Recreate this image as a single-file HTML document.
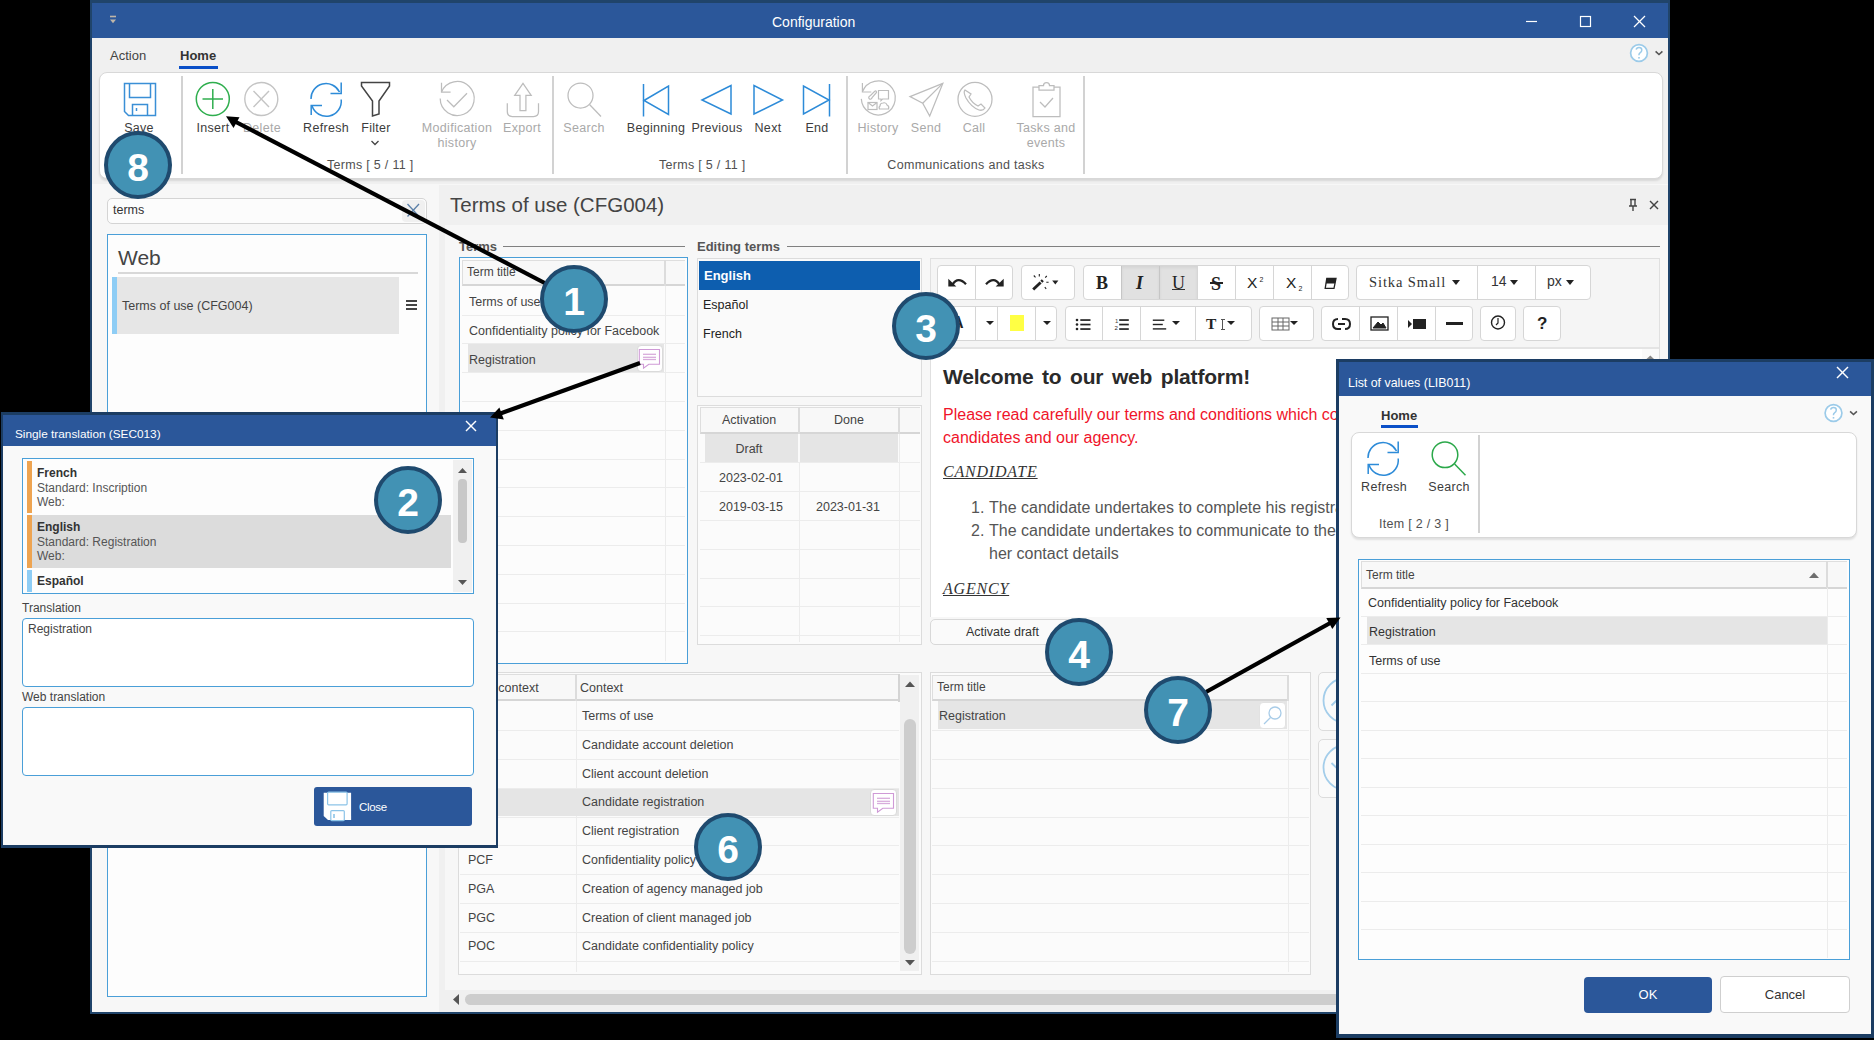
<!DOCTYPE html>
<html><head><meta charset="utf-8">
<style>
*{box-sizing:border-box;margin:0;padding:0}
html,body{width:1874px;height:1040px;overflow:hidden;background:#000;font-family:"Liberation Sans",sans-serif;color:#333;position:relative}
.a{position:absolute}
.t{position:absolute;white-space:nowrap;font-size:13px;line-height:1}
.c{position:absolute;white-space:nowrap;font-size:13px;line-height:15px;text-align:center}
.circ{position:absolute;width:68px;height:68px;border-radius:50%;background:#4292b4;border:4px solid #1f4a6e;color:#fff;font-weight:bold;font-size:39px;text-align:center;line-height:65px;z-index:50}
.rl{color:#3c3c3c;font-size:12.5px;letter-spacing:0.3px}
.dis{color:#a9a9a9}
.gl{position:absolute;height:1px;background:#ececec}
svg{position:absolute;overflow:visible}
</style></head><body>
<!-- ================= MAIN WINDOW ================= -->
<div class="a" style="left:90px;top:0;width:1580px;height:1014px;background:#20446a"></div>
<div class="a" style="left:92px;top:3px;width:1576px;height:35px;background:#2b579a"></div>
<div class="a" style="left:92px;top:38px;width:1576px;height:974px;background:#f7f7f7"></div>
<div class="a" style="left:92px;top:38px;width:1576px;height:146px;background:#f0f0f0"></div>
<div class="t" style="left:772px;top:15px;color:#fff;font-size:14px">Configuration</div>
<!-- title icons -->
<svg style="left:0;top:0" width="1874" height="40">
  <g stroke="#fff" stroke-width="1.2" fill="none">
    <line x1="1526" y1="21.5" x2="1537" y2="21.5"/>
    <rect x="1580.5" y="16.5" width="10" height="10"/>
    <line x1="1634" y1="16" x2="1645" y2="27"/><line x1="1645" y1="16" x2="1634" y2="27"/>
  </g>
  <g fill="#bfb6a8"><rect x="110" y="15.7" width="6" height="1.6"/><path d="M110 19.5 L116 19.5 L113 23.2 Z"/></g>
</svg>
<!-- menu -->
<div class="t" style="left:110px;top:49px;color:#444">Action</div>
<div class="t" style="left:180px;top:49px;color:#333;font-weight:bold">Home</div>
<div class="a" style="left:179px;top:66px;width:39px;height:2.5px;background:#0b50c8"></div>
<svg style="left:0;top:0" width="1874" height="80">
  <circle cx="1639" cy="53" r="8.4" fill="#fff" stroke="#9ccbe9" stroke-width="1.7"/>
  <path d="M1636.2 49.7 Q1636.5 47.5 1639 47.5 Q1641.8 47.5 1641.8 50 Q1641.8 51.7 1640 52.8 Q1638.9 53.6 1638.9 55.2" fill="none" stroke="#9ccbe9" stroke-width="1.5"/>
  <rect x="1638.2" y="57" width="1.6" height="1.6" fill="#9ccbe9"/>
  <path d="M1655.6 51.3 L1659 54.5 L1662.4 51.3" fill="none" stroke="#555" stroke-width="1.6"/>
</svg>
<!-- ribbon -->
<div class="a" style="left:99px;top:72px;width:1564px;height:107px;background:#fff;border:1px solid #d8d8d8;border-radius:8px;box-shadow:0 2px 2px rgba(0,0,0,0.10)"></div>
<div class="a" style="left:181px;top:76px;width:1.5px;height:98px;background:#d2d2d2"></div>
<div class="a" style="left:552px;top:76px;width:1.5px;height:98px;background:#d2d2d2"></div>
<div class="a" style="left:846px;top:76px;width:1.5px;height:98px;background:#d2d2d2"></div>
<div class="a" style="left:1083px;top:76px;width:1.5px;height:98px;background:#d2d2d2"></div>
<svg style="left:0;top:0" width="1874" height="190" fill="none" stroke-width="1.5">
  <!-- save -->
  <g stroke="#3a8fd6">
    <path d="M124.5 83.5 H155.5 V115.5 H128.5 L124.5 111.5 Z"/>
    <path d="M129.5 83.5 V97.5 H150.5 V83.5"/>
    <path d="M132.5 115.5 V104.5 H147.5 V115.5"/>
    <line x1="136.5" y1="108" x2="136.5" y2="111"/>
  </g>
  <!-- insert -->
  <g stroke="#2fae4e"><circle cx="212.8" cy="99" r="16.5"/><line x1="202.5" y1="99" x2="223" y2="99"/><line x1="212.8" y1="89" x2="212.8" y2="109"/></g>
  <!-- delete -->
  <g stroke="#c4c4c4" stroke-width="1.4"><circle cx="261.3" cy="99" r="16.5"/><line x1="253.5" y1="91" x2="269" y2="107"/><line x1="269" y1="91" x2="253.5" y2="107"/></g>
  <!-- refresh -->
  <g stroke="#2d8bd8">
    <path d="M311 99 A15 15 0 0 1 339.5 92"/>
    <path d="M341.2 82.5 V93.4 H330.5"/>
    <path d="M341.2 99.5 A15 15 0 0 1 312 105.8"/>
    <path d="M311.2 115 V105.5 H322"/>
  </g>
  <!-- filter -->
  <g stroke="#444"><path d="M361.5 82.5 H389.5 V86 L379 101 V114 L372.5 116 V101 L361.5 86 Z"/></g>
  <path d="M371.5 141 L375 144.5 L378.5 141" stroke="#444" stroke-width="1.3"/>
  <!-- modification history -->
  <g stroke="#bdbdbd" stroke-width="1.25"><path d="M441.5 92 A17 17 0 1 1 440.2 98.6"/><path d="M441.5 82.7 V92.2 H450.6"/><path d="M447 100 L453.8 106.8 L467 93.3"/></g>
  <!-- export -->
  <g stroke="#bdbdbd" stroke-width="1.25"><path d="M507.3 103.3 V111.5 Q507.3 116.5 512.3 116.5 H533.5 Q538.5 116.5 538.5 111.5 V103.3"/><path d="M520 110.6 V95.4 H514.7 L523 83.3 L531.2 95.4 H525.9 V110.6 Z"/></g>
  <!-- search -->
  <g stroke="#bdbdbd" stroke-width="1.25"><circle cx="580.5" cy="95.5" r="12.5"/><line x1="589.5" y1="104.5" x2="601" y2="116.5"/></g>
  <!-- beginning -->
  <g stroke="#2d8bd8"><line x1="643.5" y1="84" x2="643.5" y2="116.5"/><path d="M644 100.5 L668.5 86 V114.5 Z"/></g>
  <!-- previous -->
  <g stroke="#2d8bd8"><path d="M702 100 L731 85.5 V114 Z"/></g>
  <!-- next -->
  <g stroke="#2d8bd8"><path d="M754 85.5 V114 L782.5 100 Z"/></g>
  <!-- end -->
  <g stroke="#2d8bd8"><path d="M803.5 86 V114 L829 100 Z"/><line x1="829.5" y1="84" x2="829.5" y2="116.5"/></g>
  <!-- history -->
  <g stroke="#bdbdbd" stroke-width="1.2"><path d="M862.4 91.9 A17 17 0 1 1 861.3 98.9"/><path d="M862.4 83 V92 H871.3"/>
    <path d="M878.5 90.5 H888.5 V99 H882.5 L881 100.5 V99 H878.5 Z"/>
    <path d="M869.5 99 Q867.5 97 870.5 95.5 L874.5 91.5 Q876.5 90 876.5 92.5 L872.5 97 Q871 100 869.5 99 Z"/>
    <rect x="868" y="102.5" width="9" height="7"/><path d="M868 102.5 L872.5 106 L877 102.5"/>
    <path d="M879.5 109 H888.5 Q889.5 106 887 105 Q886 102 883 103 Q880 103 880 106 Q878.5 107 879.5 109 Z"/></g>
  <!-- send -->
  <g stroke="#bdbdbd" stroke-width="1.25"><path d="M942.8 83.4 L910 96.6 L922.7 103.2 L929.7 116 Z"/><line x1="922.7" y1="103.2" x2="942.8" y2="83.4"/></g>
  <!-- call -->
  <g stroke="#bdbdbd" stroke-width="1.25"><circle cx="975" cy="99.3" r="17"/><path d="M965 90 Q963 92 966 98 Q971 107 979 110 Q983 111 985 108 L981 104 L978 106 Q972 103 969 97 L971 94 Z"/></g>
  <!-- tasks -->
  <g stroke="#bdbdbd" stroke-width="1.25"><path d="M1039 87 H1033 V116.5 H1060 V87 H1054"/><path d="M1039 90 V85.5 H1043.5 Q1043.5 82.5 1046.5 82.5 Q1049.5 82.5 1049.5 85.5 H1054 V90 Z"/><path d="M1040 102 L1045 107 L1053 98"/></g>
</svg>
<!-- ribbon labels -->
<div class="c rl" style="left:109px;top:121px;width:60px">Save</div>
<div class="c rl" style="left:187px;top:121px;width:52px">Insert</div>
<div class="c rl dis" style="left:236px;top:121px;width:52px">Delete</div>
<div class="c rl" style="left:296px;top:121px;width:60px">Refresh</div>
<div class="c rl" style="left:350px;top:121px;width:52px">Filter</div>
<div class="c rl dis" style="left:412px;top:121px;width:90px">Modification<br>history</div>
<div class="c rl dis" style="left:492px;top:121px;width:60px">Export</div>
<div class="c rl" style="color:#505050;top:158px;left:327px;width:80px">Terms [ 5 / 11 ]</div>
<div class="c rl dis" style="left:554px;top:121px;width:60px">Search</div>
<div class="c rl" style="left:621px;top:121px;width:70px">Beginning</div>
<div class="c rl" style="left:687px;top:121px;width:60px">Previous</div>
<div class="c rl" style="left:738px;top:121px;width:60px">Next</div>
<div class="c rl" style="left:787px;top:121px;width:60px">End</div>
<div class="c rl" style="color:#505050;top:158px;left:659px;width:80px">Terms [ 5 / 11 ]</div>
<div class="c rl dis" style="left:848px;top:121px;width:60px">History</div>
<div class="c rl dis" style="left:896px;top:121px;width:60px">Send</div>
<div class="c rl dis" style="left:944px;top:121px;width:60px">Call</div>
<div class="c rl dis" style="left:1006px;top:121px;width:80px">Tasks and<br>events</div>
<div class="c rl" style="color:#505050;top:158px;left:886px;width:160px">Communications and tasks</div>


<!-- ============ LEFT PANEL ============ -->

<div class="a" style="left:439px;top:185px;width:6px;height:827px;background:#f0f0f0"></div>
<div class="a" style="left:107px;top:198px;width:320px;height:26px;background:#fcfcfc;border:1px solid #d4d4d4;border-radius:5px"></div>
<div class="a" style="left:402px;top:200px;width:23px;height:22px;background:#f0f0f0;border-radius:4px"></div>
<div class="t" style="left:113px;top:204px;font-size:12.5px;color:#333">terms</div>
<svg style="left:0;top:0" width="500" height="240"><g stroke="#5a7fa8" stroke-width="1.3"><line x1="407.5" y1="204" x2="419" y2="216.5"/><line x1="419" y1="204" x2="407.5" y2="216.5"/></g></svg>
<div class="a" style="left:107px;top:234px;width:320px;height:763px;background:#fdfdfd;border:1.5px solid #4a9fd8"></div>
<div class="t" style="left:118px;top:247px;font-size:21px;color:#444">Web</div>
<div class="a" style="left:118px;top:272px;width:300px;height:1.5px;background:#d8d8d8"></div>
<div class="a" style="left:112px;top:277px;width:287px;height:57px;background:#e6e6e6"></div>
<div class="a" style="left:112px;top:277px;width:5px;height:57px;background:#8ecdf5"></div>
<div class="t" style="left:122px;top:300px;font-size:12.5px;color:#444">Terms of use (CFG004)</div>
<div class="a" style="left:406px;top:300px;width:11px;height:2px;background:#444"></div>
<div class="a" style="left:406px;top:304px;width:11px;height:2px;background:#444"></div>
<div class="a" style="left:406px;top:308px;width:11px;height:2px;background:#444"></div>

<!-- ============ CONTENT ============ -->
<div class="a" style="left:445px;top:185px;width:1223px;height:40px;background:#f0f0f0"></div>
<div class="t" style="left:450px;top:195px;font-size:20.5px;color:#444">Terms of use (CFG004)</div>
<svg style="left:0;top:0" width="1874" height="240"><g stroke="#444" stroke-width="1.4" fill="none"><path d="M1630 199.5 H1636 M1631 199.5 V206 H1635 V199.5 M1629 206 H1637 M1633 206 V211"/><line x1="1650" y1="201" x2="1658" y2="209"/><line x1="1658" y1="201" x2="1650" y2="209"/></g></svg>
<div class="t" style="left:459px;top:240px;font-size:13px;font-weight:bold;color:#555">Terms</div>
<div class="a" style="left:503px;top:246px;width:182px;height:1.2px;background:#808080"></div>
<div class="t" style="left:697px;top:240px;font-size:13px;font-weight:bold;color:#555">Editing terms</div>
<div class="a" style="left:787px;top:246px;width:873px;height:1.2px;background:#808080"></div>

<!-- terms list -->
<div class="a" style="left:459px;top:257px;width:229px;height:407px;background:#fcfcfc;border:1.5px solid #4a9fd8"></div>
<div class="a" style="left:462px;top:260px;width:223px;height:26px;background:#f8f8f8;border-bottom:2px solid #d6d6d6;border-top:1px solid #dedede;border-left:1px solid #dedede"></div>
<div class="a" style="left:664px;top:260px;width:2px;height:26px;background:#dcdcdc"></div>
<div class="a" style="left:665px;top:286px;width:1px;height:375px;background:#ececec"></div>
<div class="t" style="left:467px;top:266px;font-size:12px;color:#444">Term title</div>
<div class="a" style="left:468px;top:344px;width:196px;height:28px;background:#e5e5e5"></div>
<div class="t" style="left:469px;top:296px;font-size:12.5px;color:#444">Terms of use</div>
<div class="t" style="left:469px;top:325px;font-size:12.5px;color:#444">Confidentiality policy for Facebook</div>
<div class="t" style="left:469px;top:354px;font-size:12.5px;color:#444">Registration</div>
<div class="gl" style="left:462px;top:314.5px;width:223px"></div>
<div class="gl" style="left:462px;top:343.3px;width:223px"></div>
<div class="gl" style="left:462px;top:372.1px;width:223px"></div>
<div class="gl" style="left:462px;top:400.9px;width:223px"></div>
<div class="gl" style="left:462px;top:429.7px;width:223px"></div>
<div class="gl" style="left:462px;top:458.5px;width:223px"></div>
<div class="gl" style="left:462px;top:487.3px;width:223px"></div>
<div class="gl" style="left:462px;top:516.1px;width:223px"></div>
<div class="gl" style="left:462px;top:544.9px;width:223px"></div>
<div class="gl" style="left:462px;top:573.7px;width:223px"></div>
<div class="gl" style="left:462px;top:602.5px;width:223px"></div>
<div class="gl" style="left:462px;top:631.3px;width:223px"></div>
<div class="a" style="left:637px;top:345px;width:26px;height:27px;background:#fff;border:1px solid #dadada;border-radius:4px"></div>
<svg style="left:0;top:0" width="1874" height="1040" fill="none"><g stroke="#cf9ad6" stroke-width="1.1"><path d="M639.3 349.5 H659.5 V364.2 H648.8 L643.5 368.2 V364.2 H639.3 Z"/></g><g stroke="#d8acdc" stroke-width="1.3"><line x1="643" y1="354.3" x2="656" y2="354.3"/><line x1="643" y1="357.3" x2="656" y2="357.3"/><line x1="643" y1="359.5" x2="656" y2="359.5"/></g></svg>

<!-- language list -->
<div class="a" style="left:697px;top:258px;width:225px;height:139px;background:#fafafa;border:1px solid #dcdcdc"></div>
<div class="a" style="left:699px;top:261px;width:221px;height:29px;background:#0d5eaf"></div>
<div class="t" style="left:704px;top:269px;font-size:13px;color:#fff;font-weight:bold">English</div>
<div class="t" style="left:703px;top:299px;font-size:12.5px;color:#222">Español</div>
<div class="t" style="left:703px;top:328px;font-size:12.5px;color:#222">French</div>

<!-- activation grid -->
<div class="a" style="left:697px;top:405px;width:225px;height:240px;background:#fbfbfb;border:1px solid #dcdcdc"></div>
<div class="a" style="left:700px;top:407px;width:220px;height:27px;background:#f8f8f8;border-bottom:2px solid #d6d6d6;border-top:1px solid #dedede;border-left:1px solid #dedede"></div>
<div class="a" style="left:798px;top:407px;width:2px;height:27px;background:#dcdcdc"></div>
<div class="a" style="left:898px;top:407px;width:2px;height:27px;background:#dcdcdc"></div>
<div class="a" style="left:799px;top:434px;width:1px;height:208px;background:#ececec"></div>
<div class="a" style="left:899px;top:434px;width:1px;height:208px;background:#ececec"></div>
<div class="c" style="left:700px;top:413px;width:98px;font-size:12.5px;color:#444">Activation</div>
<div class="c" style="left:800px;top:413px;width:98px;font-size:12.5px;color:#444">Done</div>
<div class="a" style="left:705px;top:434px;width:193px;height:28px;background:#e5e5e5"></div>
<div class="a" style="left:798px;top:434px;width:2px;height:28px;background:#fafafa"></div>
<div class="gl" style="left:700px;top:462.3px;width:220px"></div>
<div class="gl" style="left:700px;top:491.1px;width:220px"></div>
<div class="gl" style="left:700px;top:519.9px;width:220px"></div>
<div class="gl" style="left:700px;top:548.7px;width:220px"></div>
<div class="gl" style="left:700px;top:577.5px;width:220px"></div>
<div class="gl" style="left:700px;top:606.3px;width:220px"></div>
<div class="gl" style="left:700px;top:635.1px;width:220px"></div>
<div class="c" style="left:700px;top:442px;width:98px;font-size:12.5px;color:#444">Draft</div>
<div class="c" style="left:700px;top:471px;width:102px;font-size:12.5px;color:#444">2023-02-01</div>
<div class="c" style="left:700px;top:500px;width:102px;font-size:12.5px;color:#444">2019-03-15</div>
<div class="c" style="left:798px;top:500px;width:100px;font-size:12.5px;color:#444">2023-01-31</div>

<!-- editor -->
<div class="a" style="left:930px;top:258px;width:730px;height:359px;background:#fff;border:1px solid #e0e0e0;border-bottom:none"></div>
<div class="a" style="left:931px;top:259px;width:728px;height:90px;background:#f5f5f5;border-bottom:2px solid #e4e4e4"></div><div class="a" style="left:1642px;top:349px;width:17px;height:12px;background:#fafafa"></div><svg style="left:0;top:0" width="1874" height="400"><path d="M1646.5 359 L1650.3 355.5 L1654 359 Z" fill="#888"/></svg>
<div class="a" style="left:937px;top:265px;width:76px;height:35px;background:#fff;border:1px solid #d6d6d6;border-radius:4px;overflow:hidden"><div class="a" style="left:0px;top:0;width:38px;height:33px;background:transparent;"></div><div class="a" style="left:37px;top:0;width:38px;height:33px;background:transparent;border-left:1px solid #d6d6d6;"></div></div>
<div class="a" style="left:1021px;top:265px;width:54px;height:35px;background:#fff;border:1px solid #d6d6d6;border-radius:4px;overflow:hidden"><div class="a" style="left:0px;top:0;width:54px;height:33px;background:transparent;"></div></div>
<div class="a" style="left:1083px;top:265px;width:266px;height:35px;background:#fff;border:1px solid #d6d6d6;border-radius:4px;overflow:hidden"><div class="a" style="left:0px;top:0;width:38px;height:33px;background:transparent;"></div><div class="a" style="left:37px;top:0;width:38px;height:33px;background:#e1e1e1;border-left:1px solid #c6c6c6;box-shadow:inset 0 2px 3px rgba(0,0,0,0.06);"></div><div class="a" style="left:75px;top:0;width:38px;height:33px;background:#e1e1e1;border-left:1px solid #c6c6c6;box-shadow:inset 0 2px 3px rgba(0,0,0,0.06);"></div><div class="a" style="left:113px;top:0;width:38px;height:33px;background:transparent;border-left:1px solid #d6d6d6;"></div><div class="a" style="left:151px;top:0;width:38px;height:33px;background:transparent;border-left:1px solid #d6d6d6;"></div><div class="a" style="left:189px;top:0;width:38px;height:33px;background:transparent;border-left:1px solid #d6d6d6;"></div><div class="a" style="left:227px;top:0;width:38px;height:33px;background:transparent;border-left:1px solid #d6d6d6;"></div></div>
<div class="a" style="left:1356px;top:265px;width:235px;height:35px;background:#fff;border:1px solid #d6d6d6;border-radius:4px;overflow:hidden"><div class="a" style="left:0px;top:0;width:121px;height:33px;background:transparent;"></div><div class="a" style="left:120px;top:0;width:58px;height:33px;background:transparent;border-left:1px solid #d6d6d6;"></div><div class="a" style="left:178px;top:0;width:56px;height:33px;background:transparent;border-left:1px solid #d6d6d6;"></div></div>
<div class="a" style="left:937px;top:306px;width:120px;height:35px;background:#fff;border:1px solid #d6d6d6;border-radius:4px;overflow:hidden"><div class="a" style="left:0px;top:0;width:38px;height:33px;background:transparent;"></div><div class="a" style="left:37px;top:0;width:22px;height:33px;background:transparent;border-left:1px solid #d6d6d6;"></div><div class="a" style="left:59px;top:0;width:38px;height:33px;background:transparent;border-left:1px solid #d6d6d6;"></div><div class="a" style="left:97px;top:0;width:22px;height:33px;background:transparent;border-left:1px solid #d6d6d6;"></div></div>
<div class="a" style="left:1065px;top:306px;width:187px;height:35px;background:#fff;border:1px solid #d6d6d6;border-radius:4px;overflow:hidden"><div class="a" style="left:0px;top:0;width:37px;height:33px;background:transparent;"></div><div class="a" style="left:36px;top:0;width:38px;height:33px;background:transparent;border-left:1px solid #d6d6d6;"></div><div class="a" style="left:74px;top:0;width:55px;height:33px;background:transparent;border-left:1px solid #d6d6d6;"></div><div class="a" style="left:129px;top:0;width:57px;height:33px;background:transparent;border-left:1px solid #d6d6d6;"></div></div>
<div class="a" style="left:1259px;top:306px;width:55px;height:35px;background:#fff;border:1px solid #d6d6d6;border-radius:4px;overflow:hidden"><div class="a" style="left:0px;top:0;width:55px;height:33px;background:transparent;"></div></div>
<div class="a" style="left:1321px;top:306px;width:152px;height:35px;background:#fff;border:1px solid #d6d6d6;border-radius:4px;overflow:hidden"><div class="a" style="left:0px;top:0;width:38px;height:33px;background:transparent;"></div><div class="a" style="left:37px;top:0;width:38px;height:33px;background:transparent;border-left:1px solid #d6d6d6;"></div><div class="a" style="left:75px;top:0;width:38px;height:33px;background:transparent;border-left:1px solid #d6d6d6;"></div><div class="a" style="left:113px;top:0;width:38px;height:33px;background:transparent;border-left:1px solid #d6d6d6;"></div></div>
<div class="a" style="left:1480px;top:306px;width:36px;height:35px;background:#fff;border:1px solid #d6d6d6;border-radius:4px;overflow:hidden"><div class="a" style="left:0px;top:0;width:36px;height:33px;background:transparent;"></div></div>
<div class="a" style="left:1523px;top:306px;width:38px;height:35px;background:#fff;border:1px solid #d6d6d6;border-radius:4px;overflow:hidden"><div class="a" style="left:0px;top:0;width:38px;height:33px;background:transparent;"></div></div>
<svg style="left:0;top:0" width="1874" height="1040">
 <g fill="#222" stroke="none">
  <path d="M948.3 278.8 V286.6 H956.3 Z"/>
  <path d="M1003.7 278.8 V286.6 H995.7 Z"/>
  <path d="M1032.2 288.6 L1039.6 281.4 L1041.6 283.4 L1034.2 290.6 Z"/>
  <path d="M1040.3 280.7 L1041.8 279.2 L1043.8 281.2 L1042.3 282.7 Z"/>
  <path d="M1052.2 280.6 L1058.4 280.6 L1055.3 284.6 Z"/>
  <path d="M986 321 L990 325 L994 321 Z"/>
  <path d="M1043 321 L1047 325 L1051 321 Z"/>
  <path d="M1172 321 L1176 325 L1180 321 Z"/>
  <path d="M1227 321 L1231 325 L1235 321 Z"/>
  <path d="M1290 321 L1294 325 L1298 321 Z"/>
  <path d="M1452 280 L1460 280 L1456 285 Z"/>
  <path d="M1510 280 L1518 280 L1514 285 Z"/>
  <path d="M1566 280 L1574 280 L1570 285 Z"/>
  <circle cx="1077" cy="320" r="1.3"/><circle cx="1077" cy="324.5" r="1.3"/><circle cx="1077" cy="329" r="1.3"/>
  <rect x="1080.3" y="319.2" width="10.2" height="1.7"/><rect x="1080.3" y="323.7" width="10.2" height="1.7"/><rect x="1080.3" y="328.2" width="10.2" height="1.7"/>
  <rect x="1119.2" y="319.2" width="9.6" height="1.7"/><rect x="1119.2" y="323.7" width="9.6" height="1.7"/><rect x="1119.2" y="328.2" width="9.6" height="1.7"/>
  <text x="1115" y="323" font-size="6" font-family="Liberation Sans" fill="#444">1</text><text x="1114.5" y="330" font-size="6" font-family="Liberation Sans" fill="#222">2</text>
  <rect x="1152.8" y="319.5" width="11.5" height="1.4"/><rect x="1152.8" y="323.8" width="10" height="1.4"/><rect x="1152.8" y="328.2" width="13.4" height="1.4"/>
  <rect x="1413" y="319" width="13" height="10"/>
  <rect x="1446" y="322" width="17" height="3"/>
  <path d="M1408 320 L1412 324 L1408 328 Z"/>
 </g>
 <g fill="none" stroke="#222">
  <path d="M1326.8 278.5 L1336 278.5 L1334 288.3 L1325.2 288.3 Z" stroke-width="1.3" fill="#fff"/>
  <path d="M1326.8 278.5 L1336 278.5 L1335 283.5 L1325.8 283.5 Z" fill="#222" stroke="none"/>
  <rect x="1272" y="318" width="17" height="12" stroke="#666" stroke-width="1"/><path d="M1272 322 H1289 M1272 326 H1289 M1278 318 V330 M1283 318 V330" stroke="#666" stroke-width="1"/>
  <path d="M1338 319 Q1333 319 1333 324 Q1333 329 1338 329 H1341 M1342 319 H1345 Q1350 319 1350 324 Q1350 329 1345 329 M1338 324 H1345" stroke-width="2"/>
  <rect x="1371" y="317" width="17" height="13" stroke-width="1.3"/><path d="M1373 328 L1378 322 L1381 325 L1383 323 L1386 328 Z" fill="#222"/>
  <circle cx="1498" cy="322.5" r="6.5" stroke-width="1.4"/><path d="M1498 318 V323 L1496 325" stroke-width="1.2"/>
  <path d="M952.5 284.5 Q958 276 966 284.2" stroke-width="2.3"/>
  <path d="M999.5 284.5 Q994 276 986 284.2" stroke-width="2.3"/>
  <path d="M1039.3 274 V276.5 M1033.8 275.5 L1035.5 277.3 M1046.8 276 L1045.2 277.7 M1046.3 282.3 H1048.6 M1044.8 287.2 L1046.2 288.8" stroke-width="1.1"/>
 </g>
 <g fill="#ffff44"><rect x="1010" y="315" width="14" height="16"/></g>
</svg>
<div class="t" style="left:1096px;top:274px;font-size:18px;font-weight:bold;font-family:'Liberation Serif',serif;color:#222">B</div>
<div class="t" style="left:1136px;top:274px;font-size:18px;font-style:italic;font-weight:bold;font-family:'Liberation Serif',serif;color:#222">I</div>
<div class="t" style="left:1172px;top:274px;font-size:18px;font-family:'Liberation Serif',serif;color:#222">U</div><div class="a" style="left:1172px;top:289px;width:13px;height:1px;background:#333"></div>
<div class="t" style="left:1211px;top:275px;font-size:18px;font-weight:bold;font-family:'Liberation Serif',serif;color:#222">S</div><div class="a" style="left:1210px;top:282px;width:13px;height:1.8px;background:#222"></div>
<div class="t" style="left:1247px;top:275px;font-size:15.5px;color:#222">X</div><div class="t" style="left:1259.5px;top:276px;font-size:7px;color:#222">2</div>
<div class="t" style="left:1286px;top:275px;font-size:15.5px;color:#222">X</div><div class="t" style="left:1298.5px;top:285px;font-size:7px;color:#222">2</div>
<div class="t" style="left:1369px;top:275px;font-size:14.5px;font-family:'Liberation Serif',serif;color:#333;letter-spacing:0.9px">Sitka Small</div>
<div class="t" style="left:1491px;top:274px;font-size:14px;color:#333">14</div>
<div class="t" style="left:1547px;top:274px;font-size:14px;color:#333">px</div>
<div class="t" style="left:1206px;top:316px;font-size:15.5px;font-weight:bold;font-family:'Liberation Serif',serif;color:#222">T</div><div class="a" style="left:1222px;top:319px;width:1px;height:11px;background:#555"></div><div class="a" style="left:1220.5px;top:319px;width:4px;height:1px;background:#555"></div><div class="a" style="left:1220.5px;top:329px;width:4px;height:1px;background:#555"></div>
<div class="t" style="left:1537px;top:315px;font-size:17px;font-weight:bold;color:#222">?</div>
<div class="t" style="left:952px;top:315px;font-size:16px;font-weight:bold;color:#222">A</div>

<div class="t" style="left:943px;top:366px;font-size:21px;font-weight:bold;color:#2a2a2a;letter-spacing:-0.2px;word-spacing:3px">Welcome to our web platform!</div>
<div class="t" style="left:943px;top:403px;font-size:16px;color:#f0142a;line-height:23px">Please read carefully our terms and conditions which concern our<br>candidates and our agency.</div>
<div class="t" style="left:943px;top:464px;font-size:16px;font-style:italic;color:#333;font-family:'Liberation Serif',serif;text-decoration:underline;letter-spacing:0.8px">CANDIDATE</div>
<div class="t" style="left:971px;top:496px;font-size:16px;color:#555;line-height:23px">1.</div><div class="t" style="left:971px;top:519px;font-size:16px;color:#555;line-height:23px">2.</div><div class="t" style="left:989px;top:496px;font-size:16px;color:#555;line-height:23px">The candidate undertakes to complete his registration<br>The candidate undertakes to communicate to their<br>her contact details</div>
<div class="t" style="left:943px;top:581px;font-size:16px;font-style:italic;color:#333;font-family:'Liberation Serif',serif;text-decoration:underline;letter-spacing:0.8px">AGENCY</div>
<div class="a" style="left:930px;top:619px;width:150px;height:26px;background:#fafafa;border:1px solid #d8d8d8;border-radius:5px"></div>
<div class="t" style="left:966px;top:626px;font-size:12.5px;color:#333">Activate draft</div>

<!-- bottom left grid -->
<div class="a" style="left:458px;top:672px;width:464px;height:303px;background:#fbfbfb;border:1px solid #dcdcdc"></div>
<div class="a" style="left:460px;top:674px;width:440px;height:27px;background:#f8f8f8;border-bottom:2px solid #d6d6d6;border-top:1px solid #dedede;border-left:1px solid #dedede"></div>
<div class="a" style="left:575px;top:674px;width:2px;height:27px;background:#dcdcdc"></div>
<div class="a" style="left:576px;top:701px;width:1px;height:271px;background:#ececec"></div>
<div class="t" style="left:465px;top:682px;font-size:12.5px;color:#444">Code context</div>
<div class="t" style="left:580px;top:682px;font-size:12.5px;color:#444">Context</div>
<div class="a" style="left:460px;top:788px;width:439px;height:28px;background:#e5e5e5"></div>
<div class="gl" style="left:460px;top:730.2px;width:439px"></div>
<div class="gl" style="left:460px;top:759.0px;width:439px"></div>
<div class="gl" style="left:460px;top:787.8px;width:439px"></div>
<div class="gl" style="left:460px;top:816.6px;width:439px"></div>
<div class="gl" style="left:460px;top:845.4px;width:439px"></div>
<div class="gl" style="left:460px;top:874.2px;width:439px"></div>
<div class="gl" style="left:460px;top:903.0px;width:439px"></div>
<div class="gl" style="left:460px;top:931.8px;width:439px"></div>
<div class="gl" style="left:460px;top:960.6px;width:439px"></div>
<div class="t" style="left:582px;top:710.0px;font-size:12.5px;color:#444">Terms of use</div>
<div class="t" style="left:582px;top:738.8px;font-size:12.5px;color:#444">Candidate account deletion</div>
<div class="t" style="left:582px;top:767.6px;font-size:12.5px;color:#444">Client account deletion</div>
<div class="t" style="left:582px;top:796.4px;font-size:12.5px;color:#444">Candidate registration</div>
<div class="t" style="left:582px;top:825.2px;font-size:12.5px;color:#444">Client registration</div>
<div class="t" style="left:582px;top:854.0px;font-size:12.5px;color:#444">Confidentiality policy</div>
<div class="t" style="left:582px;top:882.8px;font-size:12.5px;color:#444">Creation of agency managed job</div>
<div class="t" style="left:582px;top:911.6px;font-size:12.5px;color:#444">Creation of client managed job</div>
<div class="t" style="left:582px;top:940.4px;font-size:12.5px;color:#444">Candidate confidentiality policy</div>
<div class="t" style="left:468px;top:854.0px;font-size:12.5px;color:#444">PCF</div>
<div class="t" style="left:468px;top:882.8px;font-size:12.5px;color:#444">PGA</div>
<div class="t" style="left:468px;top:911.6px;font-size:12.5px;color:#444">PGC</div>
<div class="t" style="left:468px;top:940.4px;font-size:12.5px;color:#444">POC</div>
<div class="a" style="left:870px;top:789px;width:27px;height:27px;background:#fff;border:1px solid #dadada;border-radius:4px"></div>
<svg style="left:0;top:0" width="1874" height="1040" fill="none"><g transform="translate(234,444)"><g stroke="#cf9ad6" stroke-width="1.1"><path d="M639.3 349.5 H659.5 V364.2 H648.8 L643.5 368.2 V364.2 H639.3 Z"/></g><g stroke="#d8acdc" stroke-width="1.3"><line x1="643" y1="354.3" x2="656" y2="354.3"/><line x1="643" y1="357.3" x2="656" y2="357.3"/><line x1="643" y1="359.5" x2="656" y2="359.5"/></g></g>
<path d="M905 687 L910 681.5 L915 687 Z" fill="#555"/><path d="M905 960 L910 965.5 L915 960 Z" fill="#555"/></svg>
<div class="a" style="left:900px;top:675px;width:19px;height:296px;background:#f0f0f0"></div><div class="a" style="left:898px;top:674px;width:2px;height:28px;background:#d4d4d4"></div><svg style="left:0;top:0;z-index:1" width="1874" height="1040"><path d="M905 687 L910 681.5 L915 687 Z" fill="#555"/><path d="M905 960 L910 965.5 L915 960 Z" fill="#555"/></svg><div class="a" style="left:904px;top:719px;width:12px;height:235px;background:#cdcdcd;border-radius:6px"></div>

<!-- bottom mid grid -->
<div class="a" style="left:930px;top:672px;width:381px;height:303px;background:#fbfbfb;border:1px solid #dcdcdc"></div>
<div class="a" style="left:932px;top:675px;width:356px;height:26px;background:#f8f8f8;border-bottom:2px solid #d6d6d6;border-top:1px solid #dedede;border-left:1px solid #dedede"></div>
<div class="a" style="left:1287px;top:675px;width:2px;height:26px;background:#dcdcdc"></div>
<div class="a" style="left:1288px;top:701px;width:1px;height:271px;background:#ececec"></div>
<div class="t" style="left:937px;top:681px;font-size:12px;color:#444">Term title</div>
<div class="a" style="left:938px;top:701px;width:349px;height:28px;background:#e5e5e5"></div>
<div class="gl" style="left:932px;top:730.2px;width:377px"></div>
<div class="gl" style="left:932px;top:759.0px;width:377px"></div>
<div class="gl" style="left:932px;top:787.8px;width:377px"></div>
<div class="gl" style="left:932px;top:816.6px;width:377px"></div>
<div class="gl" style="left:932px;top:845.4px;width:377px"></div>
<div class="gl" style="left:932px;top:874.2px;width:377px"></div>
<div class="gl" style="left:932px;top:903.0px;width:377px"></div>
<div class="gl" style="left:932px;top:931.8px;width:377px"></div>
<div class="gl" style="left:932px;top:960.6px;width:377px"></div>
<div class="t" style="left:939px;top:710px;font-size:12.5px;color:#444">Registration</div>
<div class="a" style="left:1259px;top:702px;width:27px;height:27px;background:#fff;border:1px solid #e2e2e2;border-radius:4px"></div>
<svg style="left:0;top:0" width="1874" height="1040" fill="none"><g stroke="#a8cce8" stroke-width="1.3"><circle cx="1275" cy="713" r="6"/><line x1="1270.5" y1="717.5" x2="1264" y2="724"/></g></svg>
<!-- side buttons -->
<div class="a" style="left:1318px;top:672px;width:30px;height:59px;background:#fafafa;border:1px solid #dcdcdc;border-radius:5px"></div>
<div class="a" style="left:1318px;top:739px;width:30px;height:59px;background:#fafafa;border:1px solid #dcdcdc;border-radius:5px"></div>
<svg style="left:0;top:0" width="1874" height="1040" fill="none"><g stroke="#a3cdea" stroke-width="1.8"><circle cx="1346" cy="700.5" r="22.5"/><circle cx="1346" cy="767.5" r="22.5"/><path d="M1331.5 705.5 L1345 692 L1358 705.5"/><path d="M1331.5 763 L1345 776 L1358 763"/></g></svg>
<!-- h scrollbar -->
<div class="a" style="left:445px;top:990px;width:1222px;height:22px;background:#f0f0f0"></div>
<div class="a" style="left:465px;top:994px;width:1202px;height:11px;background:#cdcdcd;border-radius:6px"></div>
<svg style="left:0;top:0" width="1874" height="1040"><path d="M453 999.5 L459 994 V1005 Z" fill="#555"/></svg>

<!-- ============ SINGLE TRANSLATION DIALOG ============ -->
<div class="a" style="left:1px;top:412px;width:497px;height:436px;background:#1c3d63;z-index:20">
  <div class="a" style="left:2px;top:3px;width:493px;height:31px;background:#2b579a"></div>
  <div class="a" style="left:2px;top:34px;width:493px;height:399px;background:#f9f9f9"></div>
  <div class="t" style="left:14px;top:17px;color:#fff;font-size:11.8px">Single translation (SEC013)</div>
  <svg style="left:0;top:0" width="497" height="436"><g stroke="#fff" stroke-width="1.4"><line x1="465" y1="9" x2="475" y2="19"/><line x1="475" y1="9" x2="465" y2="19"/></g></svg>
  <div class="a" style="left:21px;top:46px;width:452px;height:136px;background:#fdfdfd;border:1.5px solid #4a9fd8"></div>
  <div class="a" style="left:26px;top:49px;width:5px;height:52px;background:#eea451"></div>
  <div class="t" style="left:36px;top:55px;font-size:12px;font-weight:bold;color:#333">French</div>
  <div class="t" style="left:36px;top:69px;font-size:12px;color:#555;line-height:14px">Standard: Inscription<br>Web:</div>
  <div class="a" style="left:31px;top:103px;width:419px;height:53px;background:#dcdcdc"></div>
  <div class="a" style="left:26px;top:103px;width:5px;height:53px;background:#eea451"></div>
  <div class="t" style="left:36px;top:109px;font-size:12px;font-weight:bold;color:#333">English</div>
  <div class="t" style="left:36px;top:123px;font-size:12px;color:#555;line-height:14px">Standard: Registration<br>Web:</div>
  <div class="a" style="left:26px;top:158px;width:5px;height:22px;background:#8ecdf5"></div>
  <div class="t" style="left:36px;top:163px;font-size:12px;font-weight:bold;color:#333">Español</div>
  <div class="a" style="left:452px;top:48px;width:19px;height:132px;background:#f0f0f0"></div>
  <div class="a" style="left:457px;top:67px;width:9px;height:64px;background:#c8c8c8;border-radius:4px"></div>
  <svg style="left:0;top:0" width="497" height="436"><path d="M457 61 L461.5 56 L466 61 Z" fill="#555"/><path d="M457 168 L461.5 173 L466 168 Z" fill="#555"/></svg>
  <div class="t" style="left:21px;top:190px;font-size:12px;color:#444">Translation</div>
  <div class="a" style="left:21px;top:206px;width:452px;height:69px;background:#fff;border:1.5px solid #4a9fd8;border-radius:4px"></div>
  <div class="t" style="left:27px;top:211px;font-size:12px;color:#444">Registration</div>
  <div class="t" style="left:21px;top:279px;font-size:12px;color:#444">Web translation</div>
  <div class="a" style="left:21px;top:295px;width:452px;height:69px;background:#fff;border:1.5px solid #4a9fd8;border-radius:4px"></div>
  <div class="a" style="left:313px;top:375px;width:158px;height:39px;background:#2b579a;border-radius:3px"></div>
  <svg style="left:0;top:0" width="497" height="436"><path d="M322.7 380.7 H350.1 V408.1 H327 L322.7 404 Z" fill="#fff"/><g fill="#fff" stroke="#8cc4e8" stroke-width="1.2"><rect x="326.6" y="380.2" width="19.5" height="12.6" rx="1"/><rect x="329.8" y="398.6" width="13.5" height="10" rx="1"/></g><rect x="332.2" y="402" width="1.6" height="4" fill="#8cc4e8"/></svg>
  <div class="t" style="left:358px;top:390px;color:#fff;font-size:11.5px;letter-spacing:-0.3px">Close</div>
</div>

<!-- ============ LIST OF VALUES DIALOG ============ -->
<div class="a" style="left:1336px;top:359px;width:538px;height:679px;background:#1c3d63;z-index:20">
  <div class="a" style="left:3px;top:3px;width:532px;height:34px;background:#2b579a"></div>
  <div class="a" style="left:3px;top:37px;width:532px;height:638px;background:#f9f9f9"></div>
  <div class="t" style="left:12px;top:18px;color:#fff;font-size:12.4px">List of values (LIB011)</div>
  <svg style="left:0;top:0" width="538" height="679"><g stroke="#fff" stroke-width="1.4"><line x1="501" y1="8" x2="512" y2="19"/><line x1="512" y1="8" x2="501" y2="19"/></g>
    <g transform="translate(-1141.5,1)"><circle cx="1639" cy="53" r="8.4" fill="#fff" stroke="#9ccbe9" stroke-width="1.7"/>
    <path d="M1636.2 49.7 Q1636.5 47.5 1639 47.5 Q1641.8 47.5 1641.8 50 Q1641.8 51.7 1640 52.8 Q1638.9 53.6 1638.9 55.2" fill="none" stroke="#9ccbe9" stroke-width="1.5"/>
    <rect x="1638.2" y="57" width="1.6" height="1.6" fill="#9ccbe9"/>
    <path d="M1655.6 51.3 L1659 54.5 L1662.4 51.3" fill="none" stroke="#555" stroke-width="1.6"/></g>
  </svg>
  <div class="t" style="left:45px;top:50px;font-size:13px;font-weight:bold;color:#333">Home</div>
  <div class="a" style="left:45px;top:66px;width:37px;height:2.5px;background:#0b50c8"></div>
  <div class="a" style="left:15px;top:73px;width:506px;height:106px;background:#fff;border:1px solid #d8d8d8;border-radius:8px;box-shadow:0 2px 2px rgba(0,0,0,0.10)"></div>
  <div class="a" style="left:142px;top:76px;width:1.5px;height:98px;background:#d2d2d2"></div>
  <svg style="left:0;top:0" width="538" height="679" fill="none" stroke-width="1.5">
    <g stroke="#2d8bd8" transform="translate(1057,359) translate(-1336,-359)">
      <path d="M311 99 A15 15 0 0 1 339.5 92"/>
      <path d="M341.2 82.5 V93.4 H330.5"/>
      <path d="M341.2 99.5 A15 15 0 0 1 312 105.8"/>
      <path d="M311.2 115 V105.5 H322"/>
    </g>
    <g stroke="#2ba84a"><circle cx="109" cy="95.8" r="12.8"/><line x1="118.6" y1="105.1" x2="129.5" y2="116.3"/></g>
  </svg>
  <div class="c rl" style="left:18px;top:121px;width:60px">Refresh</div>
  <div class="c rl" style="left:83px;top:121px;width:60px">Search</div>
  <div class="c rl" style="color:#505050;top:158px;left:38px;width:80px">Item [ 2 / 3 ]</div>
  <div class="a" style="left:22px;top:200px;width:492px;height:401px;background:#fdfdfd;border:1.5px solid #4a9fd8"></div>
  <div class="a" style="left:25px;top:202px;width:486px;height:28px;background:#f8f8f8;border-bottom:2px solid #d6d6d6;border-top:1px solid #dedede;border-left:1px solid #dedede"></div>
  <div class="a" style="left:490px;top:202px;width:2px;height:27px;background:#dcdcdc"></div>
  <div class="a" style="left:491px;top:229px;width:1px;height:370px;background:#ececec"></div>
  <div class="t" style="left:30px;top:210px;font-size:12px;color:#444">Term title</div>
  <svg style="left:0;top:0" width="538" height="679"><path d="M473 219 L478 213.5 L483 219 Z" fill="#6e6e6e"/></svg>
  <div class="a" style="left:31px;top:258px;width:460px;height:28px;background:#e5e5e5"></div>
<div class="gl" style="left:25px;top:257px;width:486px"></div>
<div class="gl" style="left:25px;top:285px;width:486px"></div>
<div class="gl" style="left:25px;top:314px;width:486px"></div>
<div class="gl" style="left:25px;top:342px;width:486px"></div>
<div class="gl" style="left:25px;top:371px;width:486px"></div>
<div class="gl" style="left:25px;top:399px;width:486px"></div>
<div class="gl" style="left:25px;top:428px;width:486px"></div>
<div class="gl" style="left:25px;top:456px;width:486px"></div>
<div class="gl" style="left:25px;top:485px;width:486px"></div>
<div class="gl" style="left:25px;top:513px;width:486px"></div>
<div class="gl" style="left:25px;top:542px;width:486px"></div>
<div class="gl" style="left:25px;top:570px;width:486px"></div>
  <div class="t" style="left:32px;top:238px;font-size:12.5px;color:#333">Confidentiality policy for Facebook</div>
  <div class="t" style="left:33px;top:267px;font-size:12.5px;color:#333">Registration</div>
  <div class="t" style="left:33px;top:296px;font-size:12.5px;color:#333">Terms of use</div>
  <div class="a" style="left:248px;top:618px;width:128px;height:36px;background:#2b579a;border-radius:4px"></div>
  <div class="c" style="left:248px;top:628px;width:128px;color:#fff;font-size:13px">OK</div>
  <div class="a" style="left:384px;top:617px;width:130px;height:37px;background:#fff;border:1px solid #cfcfcf;border-radius:4px"></div>
  <div class="c" style="left:384px;top:628px;width:130px;color:#333;font-size:13px">Cancel</div>
</div>

<!-- ============ ARROWS ============ -->
<svg style="left:0;top:0;z-index:40" width="1874" height="1040">
  <g stroke="#000" stroke-width="4.2" fill="none" stroke-linecap="butt">
    <line x1="560" y1="291" x2="234" y2="121"/>
    <line x1="640" y1="363" x2="499" y2="414"/>
    <line x1="1206" y1="692" x2="1332" y2="622"/>
  </g>
  <g fill="#000">
    <path d="M226 116.3 L239.5 117.3 L233.5 128 Z"/>
    <path d="M490 417.5 L499.4 407.5 L503.8 419.4 Z"/>
    <path d="M1340.5 617.5 L1326.3 618 L1332.3 629 Z"/>
  </g>
</svg>
<div class="circ" style="left:540px;top:265px">1</div>
<div class="circ" style="left:374px;top:466px">2</div>
<div class="circ" style="left:892px;top:292px">3</div>
<div class="circ" style="left:1045px;top:618px">4</div>
<div class="circ" style="left:694px;top:813px">6</div>
<div class="circ" style="left:1144px;top:676px">7</div>
<div class="circ" style="left:104px;top:131px">8</div>
</body></html>
